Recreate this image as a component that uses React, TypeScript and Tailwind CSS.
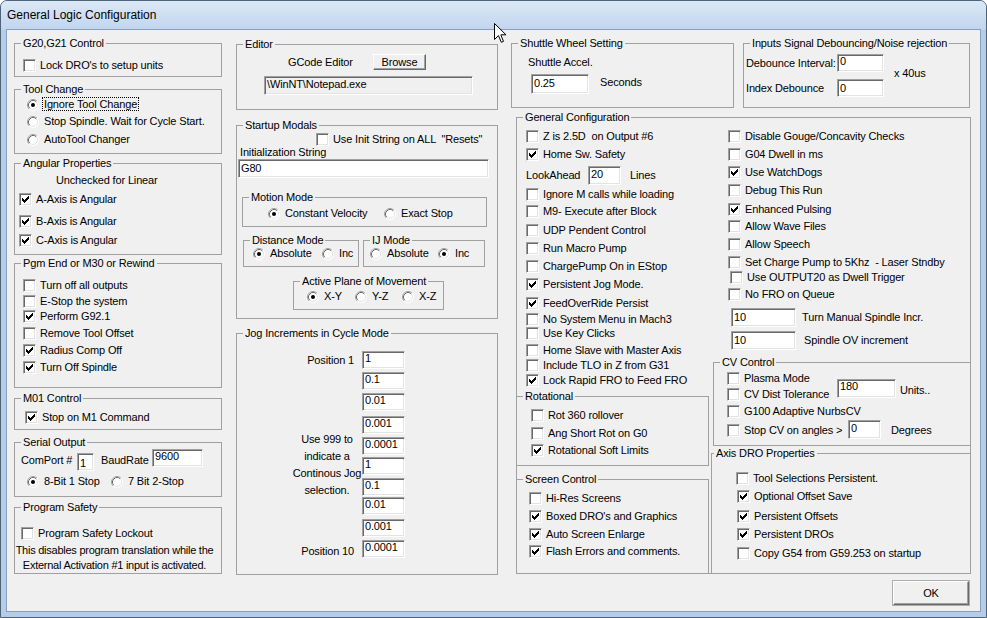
import clsx from 'clsx';
import type { ReactNode } from 'react';

// classic Win32 sunken edge (text boxes, check boxes)
const sunken =
  'border border-t-[#a0a0a0] border-l-[#a0a0a0] border-b-white border-r-white shadow-[inset_1px_1px_#696969,inset_-1px_-1px_#e3e3e3]';

function Tick() {
  return (
    <svg className="absolute left-[2px] top-[2px]" width="7" height="7" viewBox="0 0 7 7" shapeRendering="crispEdges">
      <rect x="6" y="0" width="1" height="1" />
      <rect x="5" y="1" width="2" height="1" />
      <rect x="0" y="2" width="1" height="1" />
      <rect x="4" y="2" width="3" height="1" />
      <rect x="0" y="3" width="2" height="1" />
      <rect x="3" y="3" width="3" height="1" />
      <rect x="0" y="4" width="5" height="1" />
      <rect x="1" y="5" width="3" height="1" />
      <rect x="2" y="6" width="1" height="1" />
    </svg>
  );
}

function Check({ label, on, className }: { label: ReactNode; on?: boolean; className?: string }) {
  return (
    <div className={clsx('flex h-[13px] items-center', className)}>
      <span className={clsx('relative h-[13px] w-[13px] shrink-0 bg-white', sunken)}>{on && <Tick />}</span>
      <span className="ml-[4px] whitespace-pre">{label}</span>
    </div>
  );
}

function Radio({ label, on, className }: { label: ReactNode; on?: boolean; className?: string }) {
  return (
    <div className={clsx('flex h-[13px] items-center', className)}>
      <svg className="shrink-0" width="12" height="12" viewBox="0 0 12 12">
        <circle cx="6" cy="6" r="5.5" fill="#fff" />
        <path d="M2.11 9.89A5.5 5.5 0 0 1 9.89 2.11" fill="none" stroke="#a0a0a0" />
        <path d="M9.89 2.11A5.5 5.5 0 0 1 2.11 9.89" fill="none" stroke="#ffffff" />
        <path d="M2.82 9.18A4.5 4.5 0 0 1 9.18 2.82" fill="none" stroke="#696969" />
        <path d="M9.18 2.82A4.5 4.5 0 0 1 2.82 9.18" fill="none" stroke="#e3e3e3" />
        {on && <circle cx="6" cy="6" r="2" fill="#000" />}
      </svg>
      <span className="ml-[5px] whitespace-pre">{label}</span>
    </div>
  );
}

function Field({ value, className, gray }: { value: string; className?: string; gray?: boolean }) {
  return (
    <div className={clsx('shrink-0 overflow-hidden whitespace-nowrap pl-[2px]', sunken, gray ? 'bg-[#f0f0f0]' : 'bg-white', className)}>
      {value}
    </div>
  );
}

function Group({
  title,
  className,
  legendClass,
  children,
}: {
  title: string;
  className?: string;
  legendClass?: string;
  children?: ReactNode;
}) {
  return (
    <fieldset className={clsx('min-w-0 shrink-0 border border-[#a0a0a0]', className)}>
      <legend className={clsx('whitespace-nowrap px-[2px] leading-[13px]', legendClass ?? 'ml-[6px]')}>{title}</legend>
      {children}
    </fieldset>
  );
}

const pgmEnd = [
  { label: 'Turn off all outputs', on: false, mt: 'mt-[9px]' },
  { label: 'E-Stop the system', on: false, mt: 'mt-[3px]' },
  { label: 'Perform G92.1', on: true, mt: 'mt-[2px]' },
  { label: 'Remove Tool Offset', on: false, mt: 'mt-[4px]' },
  { label: 'Radius Comp Off', on: true, mt: 'mt-[4px]' },
  { label: 'Turn Off Spindle', on: true, mt: 'mt-[4px]' },
];

const jog = [
  { v: '1', mt: 'mt-[11px]' },
  { v: '0.1', mt: 'mt-[3px]' },
  { v: '0.01', mt: 'mt-[3px]' },
  { v: '0.001', mt: 'mt-[5px]' },
  { v: '0.0001', mt: 'mt-[3px]' },
  { v: '1', mt: 'mt-[2px]' },
  { v: '0.1', mt: 'mt-[3px]' },
  { v: '0.01', mt: 'mt-[1px]' },
  { v: '0.001', mt: 'mt-[4px]' },
  { v: '0.0001', mt: 'mt-[3px]' },
];

const genLeft = [
  { label: 'Ignore M calls while loading', on: false, mt: 'mt-[3px]' },
  { label: 'M9- Execute after Block', on: false, mt: 'mt-[4px]' },
  { label: 'UDP Pendent Control', on: false, mt: 'mt-[6px]' },
  { label: 'Run Macro Pump', on: false, mt: 'mt-[5px]' },
  { label: 'ChargePump On in EStop', on: false, mt: 'mt-[5px]' },
  { label: 'Persistent Jog Mode.', on: true, mt: 'mt-[5px]' },
  { label: 'FeedOverRide Persist', on: true, mt: 'mt-[6px]' },
  { label: 'No System Menu in Mach3', on: false, mt: 'mt-[3px]' },
  { label: 'Use Key Clicks', on: false, mt: 'mt-[1px]' },
  { label: 'Home Slave with Master Axis', on: false, mt: 'mt-[4px]' },
  { label: 'Include TLO in Z from G31', on: false, mt: 'mt-[2px]' },
  { label: 'Lock Rapid FRO to Feed FRO', on: true, mt: 'mt-[2px]' },
];

const genRight = [
  { label: 'Disable Gouge/Concavity Checks', on: false, mt: 'mt-[6px] ml-[18px]' },
  { label: 'G04 Dwell in ms', on: false, mt: 'mt-[5px] ml-[18px]' },
  { label: 'Use WatchDogs', on: true, mt: 'mt-[5px] ml-[18px]' },
  { label: 'Debug This Run', on: false, mt: 'mt-[5px] ml-[18px]' },
  { label: 'Enhanced Pulsing', on: true, mt: 'mt-[6px] ml-[18px]' },
  { label: 'Allow Wave Files', on: false, mt: 'mt-[4px] ml-[18px]' },
  { label: 'Allow Speech', on: false, mt: 'mt-[5px] ml-[18px]' },
  { label: 'Set Charge Pump to 5Khz  - Laser Stndby', on: false, mt: 'mt-[5px] ml-[18px]' },
  { label: 'Use OUTPUT20 as Dwell Trigger', on: false, mt: 'mt-[2px] ml-[20px]' },
  { label: 'No FRO on Queue', on: false, mt: 'mt-[4px] ml-[18px]' },
];

const axisDro = [
  { label: 'Tool Selections Persistent.', on: false, mt: 'mt-[12px] ml-[24px]' },
  { label: 'Optional Offset Save', on: true, mt: 'mt-[5px] ml-[25px]' },
  { label: 'Persistent Offsets', on: true, mt: 'mt-[7px] ml-[25px]' },
  { label: 'Persistent DROs', on: true, mt: 'mt-[5px] ml-[25px]' },
  { label: 'Copy G54 from G59.253 on startup', on: false, mt: 'mt-[6px] ml-[25px]' },
];

function Cursor() {
  return (
    <svg className="absolute left-[493px] top-[22px]" width="13" height="21" viewBox="0 0 13 21">
      <path d="M0.5 0.5V16.5L4.5 12.6L7.3 19.3L9.5 18.4L6.8 11.8H12Z" fill="#fff" stroke="#000" strokeLinejoin="miter" />
    </svg>
  );
}

export default function App() {
  return (
    <div className="relative h-[618px] w-[987px] overflow-hidden rounded-t-[7px] border border-[#4e6278] bg-[#b4cde9] font-['Liberation_Sans',Arial,sans-serif] text-[11px] leading-[13px] tracking-[-0.15px] text-black">
      {/* title bar */}
      <div className="flex h-[29px] items-center bg-linear-to-b from-[#dce8f6] to-[#c0d5ee] pb-[1px] pl-[6px] text-[12px] leading-[15px] tracking-normal">
        General Logic Configuration
      </div>

      {/* client area */}
      <div className="mx-[6px] h-[581px] bg-[#f0f0f0] shadow-[0_0_0_1px_#879fbd]">
        <div className="flex pl-[7px] pt-[7px]">
          {/* column 1 */}
          <div className="flex w-[208px] shrink-0 flex-col">
            <Group title="G20,G21 Control" className="h-[40px]">
              <Check className="ml-[8px] mt-[9px]" label="Lock DRO's to setup units" />
            </Group>

            <Group title="Tool Change" className="mt-[6px] h-[71px]">
              <Radio
                className="ml-[12px] mt-[2px]"
                on
                label={<span className="-ml-px px-px outline-1 outline-dotted outline-black">Ignore Tool Change</span>}
              />
              <Radio className="ml-[12px] mt-[4px]" label="Stop Spindle. Wait for Cycle Start." />
              <Radio className="ml-[12px] mt-[5px]" label="AutoTool Changer" />
            </Group>

            <Group title="Angular Properties" className="mt-[3px] h-[98px]">
              <div className="ml-[41px] mt-[4px]">Unchecked for Linear</div>
              <Check className="ml-[4px] mt-[6px]" on label="A-Axis is Angular" />
              <Check className="ml-[4px] mt-[9px]" on label="B-Axis is Angular" />
              <Check className="ml-[4px] mt-[6px]" on label="C-Axis is Angular" />
            </Group>

            <Group title="Pgm End or M30 or Rewind" className="mt-[2px] h-[131px]">
              {pgmEnd.map((c) => (
                <Check key={c.label} className={clsx('ml-[8px]', c.mt)} on={c.on} label={c.label} />
              ))}
            </Group>

            <Group title="M01 Control" className="mt-[4px] h-[38px]">
              <Check className="ml-[10px] mt-[6px]" on label="Stop on M1 Command" />
            </Group>

            <Group title="Serial Output" className="mt-[6px] h-[61px]">
              <div className="ml-[6px] flex items-start">
                <span className="mt-[5px] w-[56px] whitespace-nowrap">ComPort #</span>
                <Field value="1" className="mt-[4px] h-[18px] w-[17px] pt-[3px]" />
                <span className="ml-[7px] mt-[5px] w-[51px]">BaudRate</span>
                <Field value="9600" className="h-[18px] w-[51px]" />
              </div>
              <div className="ml-[12px] mt-[4px] flex">
                <Radio className="w-[84px]" on label="8-Bit 1 Stop" />
                <Radio label="7 Bit 2-Stop" />
              </div>
            </Group>

            <Group title="Program Safety" className="mt-[4px] h-[73px]">
              <Check className="ml-[6px] mt-[13px]" label="Program Safety Lockout" />
              <div className="mt-[3px] whitespace-nowrap pr-[7px] text-center leading-[15px] tracking-[-0.25px]">
                This disables program translation while the
                <br />
                External Activation #1 input is activated.
              </div>
            </Group>
          </div>

          {/* column 2 */}
          <div className="ml-[14px] flex w-[262px] shrink-0 flex-col">
            <Group title="Editor" className="mt-[1px] h-[72px]">
              <div className="mt-[3px] flex h-[16px] items-center">
                <span className="ml-[51px] w-[85px]">GCode Editor</span>
                <button className="h-[16px] w-[53px] border border-b-[#696969] border-l-white border-r-[#696969] border-t-white bg-[#f0f0f0] leading-[12px] shadow-[inset_-1px_-1px_#a0a0a0]">
                  Browse
                </button>
              </div>
              <Field gray value="\WinNT\Notepad.exe" className="ml-[27px] mt-[6px] h-[19px] w-[209px] pt-[1px]" />
            </Group>

            <Group title="Startup Modals" className="mt-[9px] h-[200px]">
              <Check className="ml-[79px] mt-[1px]" label={'Use Init String on ALL  "Resets"'} />
              <div className="ml-[3px]">Initialization String</div>
              <Field value="G80" className="ml-[1px] h-[19px] w-[251px] pt-[2px]" />

              <Group title="Motion Mode" className="ml-[5px] mt-[13px] h-[36px] w-[245px]">
                <div className="ml-[25px] mt-[3px] flex">
                  <Radio className="w-[116px]" on label="Constant Velocity" />
                  <Radio label="Exact Stop" />
                </div>
              </Group>

              <div className="mt-[7px] flex">
                <Group title="Distance Mode" className="ml-[6px] h-[33px] w-[116px]">
                  <div className="ml-[9px] flex">
                    <Radio className="w-[69px]" on label="Absolute" />
                    <Radio label="Inc" />
                  </div>
                </Group>
                <Group title="IJ Mode" className="ml-[4px] h-[33px] w-[122px]">
                  <div className="ml-[6px] flex">
                    <Radio className="w-[68px]" label="Absolute" />
                    <Radio on label="Inc" />
                  </div>
                </Group>
              </div>

              <Group title="Active Plane of Movement" className="ml-[56px] mt-[8px] h-[35px] w-[151px]">
                <div className="ml-[13px] mt-[2px] flex">
                  <Radio className="w-[48px]" on label="X-Y" />
                  <Radio className="w-[47px]" label="Y-Z" />
                  <Radio label="X-Z" />
                </div>
              </Group>
            </Group>

            <Group title="Jog Increments in Cycle Mode" className="mt-[8px] h-[248px]">
              <div className="flex items-start">
                <div className="ml-[55px] w-[70px] shrink-0 whitespace-nowrap">
                  <div className="mt-[14px] pr-[8px] text-right">Position 1</div>
                  <div className="mt-[64px] text-center leading-[17px]">
                    Use 999 to
                    <br />
                    indicate a
                    <br />
                    Continous Jog
                    <br />
                    selection.
                  </div>
                  <div className="mt-[46px] pr-[8px] text-right">Position 10</div>
                </div>
                <div className="w-[43px] shrink-0">
                  {jog.map((j, i) => (
                    <Field key={i} value={j.v} className={clsx('h-[18px] w-[43px]', j.mt)} />
                  ))}
                </div>
              </div>
            </Group>
          </div>

          {/* columns 3 + 4 */}
          <div className="ml-[13px] flex w-[460px] shrink-0 flex-col">
            <div className="flex">
              <Group title="Shuttle Wheel Setting" className="h-[71px] w-[223px]">
                <div className="ml-[16px] mt-[6px]">Shuttle Accel.</div>
                <div className="mt-[5px] flex items-start">
                  <Field value="0.25" className="ml-[19px] h-[20px] w-[58px] pt-[2px]" />
                  <span className="ml-[11px] mt-[2px]">Seconds</span>
                </div>
              </Group>
              <Group title="Inputs Signal Debouncing/Noise rejection" className="ml-[9px] h-[71px] w-[227px]">
                <div className="flex">
                  <div>
                    <div className="mt-[4px] flex items-center">
                      <span className="ml-[2px] w-[91px] whitespace-nowrap">Debounce Interval:</span>
                      <Field value="0" className="h-[18px] w-[47px]" />
                    </div>
                    <div className="mt-[7px] flex items-center">
                      <span className="ml-[2px] w-[91px] whitespace-nowrap">Index Debounce</span>
                      <Field value="0" className="h-[18px] w-[47px] pt-[2px]" />
                    </div>
                  </div>
                  <span className="ml-[10px] mt-[17px] whitespace-nowrap">x 40us</span>
                </div>
              </Group>
            </div>

            <Group title="General Configuration" className="ml-[5px] mt-[3px] h-[463px] w-[455px]">
              <div className="flex">
                {/* left half */}
                <div className="w-[193px] shrink-0">
                  <Check className="ml-[9px] mt-[6px]" label="Z is 2.5D  on Output #6" />
                  <Check className="ml-[9px] mt-[5px]" on label="Home Sw. Safety" />
                  <div className="ml-[9px] mt-[5px] flex h-[19px] items-center">
                    <span className="w-[62px]">LookAhead</span>
                    <Field value="20" className="h-[19px] w-[33px] pt-[1px]" />
                    <span className="ml-[9px]">Lines</span>
                  </div>
                  {genLeft.map((c) => (
                    <Check key={c.label} className={clsx('ml-[9px]', c.mt)} on={c.on} label={c.label} />
                  ))}

                  <Group title="Rotational" className="-ml-px mt-[3px] h-[76px] w-[193px]">
                    <Check className="ml-[14px] mt-[6px]" label="Rot 360 rollover" />
                    <Check className="ml-[14px] mt-[5px]" label="Ang Short Rot on G0" />
                    <Check className="ml-[14px] mt-[4px]" on label="Rotational Soft Limits" />
                  </Group>

                  <Group title="Screen Control" className="-ml-px mt-[7px] h-[101px] w-[193px]">
                    <Check className="ml-[12px] mt-[6px]" label="Hi-Res Screens" />
                    <Check className="ml-[12px] mt-[5px]" on label="Boxed DRO's and Graphics" />
                    <Check className="ml-[12px] mt-[5px]" on label="Auto Screen Enlarge" />
                    <Check className="ml-[12px] mt-[4px]" on label="Flash Errors and comments." />
                  </Group>
                </div>

                {/* right half */}
                <div className="w-[260px] shrink-0">
                  {genRight.map((c) => (
                    <Check key={c.label} className={c.mt} on={c.on} label={c.label} />
                  ))}
                  <div className="mt-[7px] flex h-[19px] items-center">
                    <Field value="10" className="ml-[21px] h-[19px] w-[65px] pt-[2px]" />
                    <span className="ml-[6px]">Turn Manual Spindle Incr.</span>
                  </div>
                  <div className="mt-[4px] flex h-[19px] items-center">
                    <Field value="10" className="ml-[21px] h-[19px] w-[65px] pt-[2px]" />
                    <span className="ml-[8px]">Spindle OV increment</span>
                  </div>

                  <Group title="CV Control" className="ml-[3px] mt-[6px] h-[90px] w-[258px]">
                    <Check className="ml-[13px] mt-[3px]" label="Plasma Mode" />
                    <div className="ml-[13px] mt-[3px] flex h-[13px] items-start">
                      <Check className="w-[110px]" label="CV Dist Tolerance" />
                      <Field value="180" className="-mt-[9px] h-[19px] w-[59px]" />
                      <span className="-mt-[4px] ml-[4px]">Units..</span>
                    </div>
                    <Check className="ml-[13px] mt-[4px]" label="G100 Adaptive NurbsCV" />
                    <div className="ml-[13px] mt-[6px] flex h-[13px] items-start">
                      <Check className="w-[121px]" label="Stop CV on angles >" />
                      <Field value="0" className="-mt-[4px] h-[19px] w-[33px] pt-[1px]" />
                      <span className="ml-[10px]">Degrees</span>
                    </div>
                  </Group>

                  <Group
                    title="Axis DRO Properties"
                    legendClass="ml-[2px]"
                    className="ml-[1px] mt-[1px] h-[127px] w-[260px]"
                  >
                    {axisDro.map((c) => (
                      <Check key={c.label} className={c.mt} on={c.on} label={c.label} />
                    ))}
                  </Group>
                </div>
              </div>
            </Group>

            <button className="mr-[2px] mt-[7px] h-[24px] w-[76px] self-end border border-b-[#696969] border-l-white border-r-[#696969] border-t-white bg-[#f0f0f0] shadow-[inset_-1px_-1px_#a0a0a0,0_0_0_1px_#adadad]">
              OK
            </button>
          </div>
        </div>
      </div>

      <Cursor />
    </div>
  );
}
